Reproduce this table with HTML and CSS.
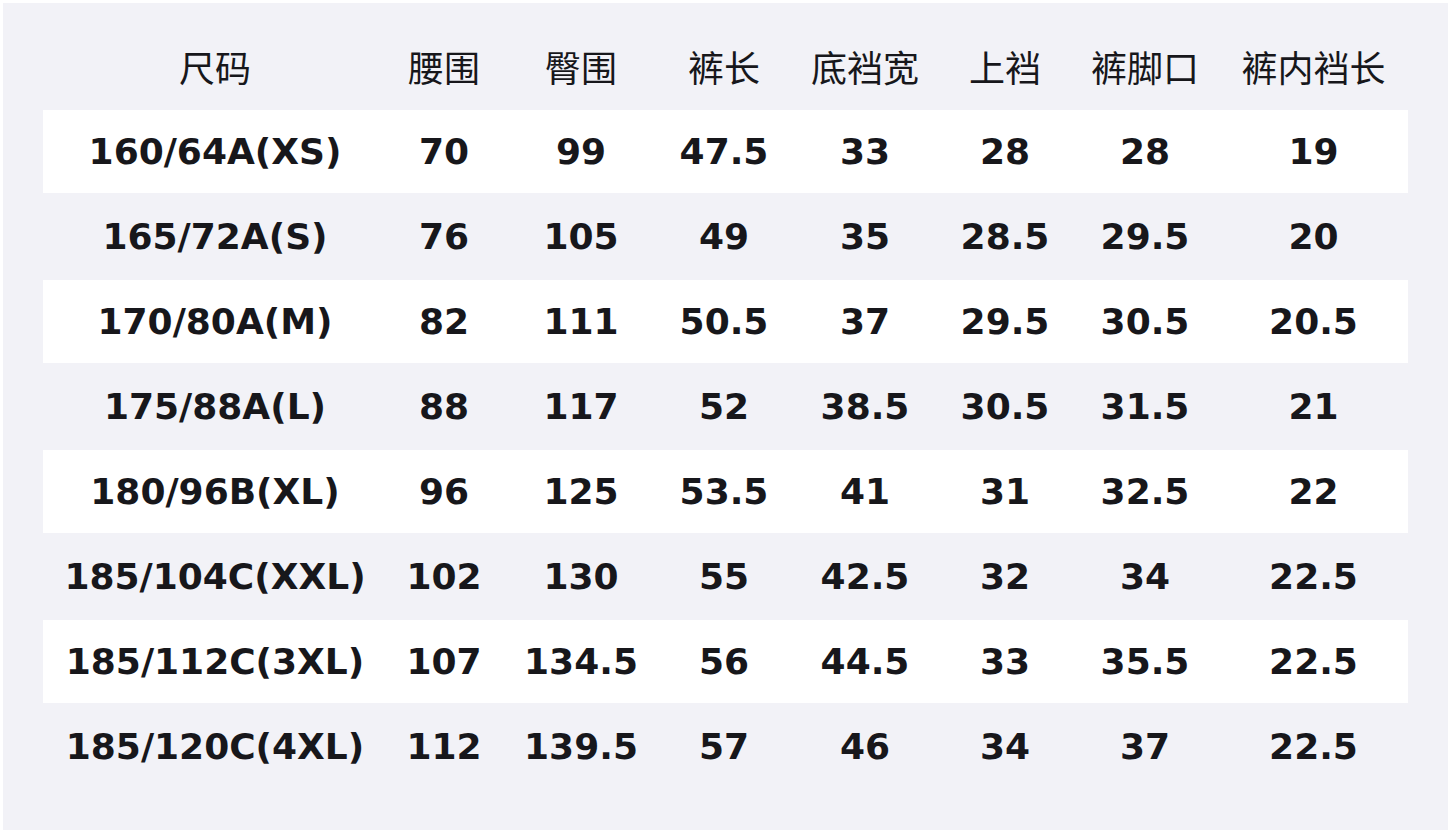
FILE: index.html
```html
<!DOCTYPE html>
<html lang="zh">
<head>
<meta charset="utf-8">
<title>尺码表</title>
<link rel="stylesheet" href="styles.css">
</head>
<body>
<div class="chart">
<table class="size-table">
<colgroup>
<col class="c-size"><col class="c-waist"><col class="c-hip"><col class="c-len"><col class="c-crotch"><col class="c-rise"><col class="c-hem"><col class="c-inseam">
</colgroup>
<thead>
<tr><th>尺码</th><th>腰围</th><th>臀围</th><th>裤长</th><th>底裆宽</th><th>上裆</th><th>裤脚口</th><th class="last">裤内裆长</th></tr>
</thead>
<tbody>
<tr><td>160/64A(XS)</td><td>70</td><td>99</td><td>47.5</td><td>33</td><td>28</td><td>28</td><td class="last">19</td></tr>
<tr><td>165/72A(S)</td><td>76</td><td>105</td><td>49</td><td>35</td><td>28.5</td><td>29.5</td><td class="last">20</td></tr>
<tr><td>170/80A(M)</td><td>82</td><td>111</td><td>50.5</td><td>37</td><td>29.5</td><td>30.5</td><td class="last">20.5</td></tr>
<tr><td>175/88A(L)</td><td>88</td><td>117</td><td>52</td><td>38.5</td><td>30.5</td><td>31.5</td><td class="last">21</td></tr>
<tr><td>180/96B(XL)</td><td>96</td><td>125</td><td>53.5</td><td>41</td><td>31</td><td>32.5</td><td class="last">22</td></tr>
<tr><td>185/104C(XXL)</td><td>102</td><td>130</td><td>55</td><td>42.5</td><td>32</td><td>34</td><td class="last">22.5</td></tr>
<tr><td>185/112C(3XL)</td><td>107</td><td>134.5</td><td>56</td><td>44.5</td><td>33</td><td>35.5</td><td class="last">22.5</td></tr>
<tr><td>185/120C(4XL)</td><td>112</td><td>139.5</td><td>57</td><td>46</td><td>34</td><td>37</td><td class="last">22.5</td></tr>
</tbody>
</table>
</div>
</body>
</html>
```
FILE: styles.css
```css
html, body {
  margin: 0;
  padding: 0;
  background: #ffffff;
}
body {
  padding: 3px;
}
.chart {
  background: #f2f2f7;
  height: 827px;
  box-sizing: border-box;
  padding: 22px 40px 40px;
}
.size-table {
  width: 1365px;
  table-layout: fixed;
  border-collapse: separate;
  border-spacing: 0;
  color: #17171b;
}
.c-size { width: 344px; }
.c-waist { width: 114px; }
.c-hip { width: 160px; }
.c-len { width: 126px; }
.c-crotch { width: 156px; }
.c-rise { width: 124px; }
.c-hem { width: 156px; }
.c-inseam { width: 185px; }
.size-table th {
  height: 81px;
  padding: 0 0 4px;
  font-family: "Noto Sans CJK SC", "Noto Sans", sans-serif;
  font-weight: 400;
  font-size: 36px;
  text-align: center;
  vertical-align: middle;
  white-space: nowrap;
}
.size-table td {
  height: 83px;
  padding: 0;
  border-bottom: 2px solid #f2f2f7;
  font-family: "DejaVu Sans", "Liberation Sans", sans-serif;
  font-weight: 700;
  font-size: 36px;
  text-align: center;
  vertical-align: middle;
  white-space: nowrap;
}
.size-table .last {
  padding-right: 4px;
}
.size-table tbody tr:nth-child(odd) td {
  background: #ffffff;
}
```
